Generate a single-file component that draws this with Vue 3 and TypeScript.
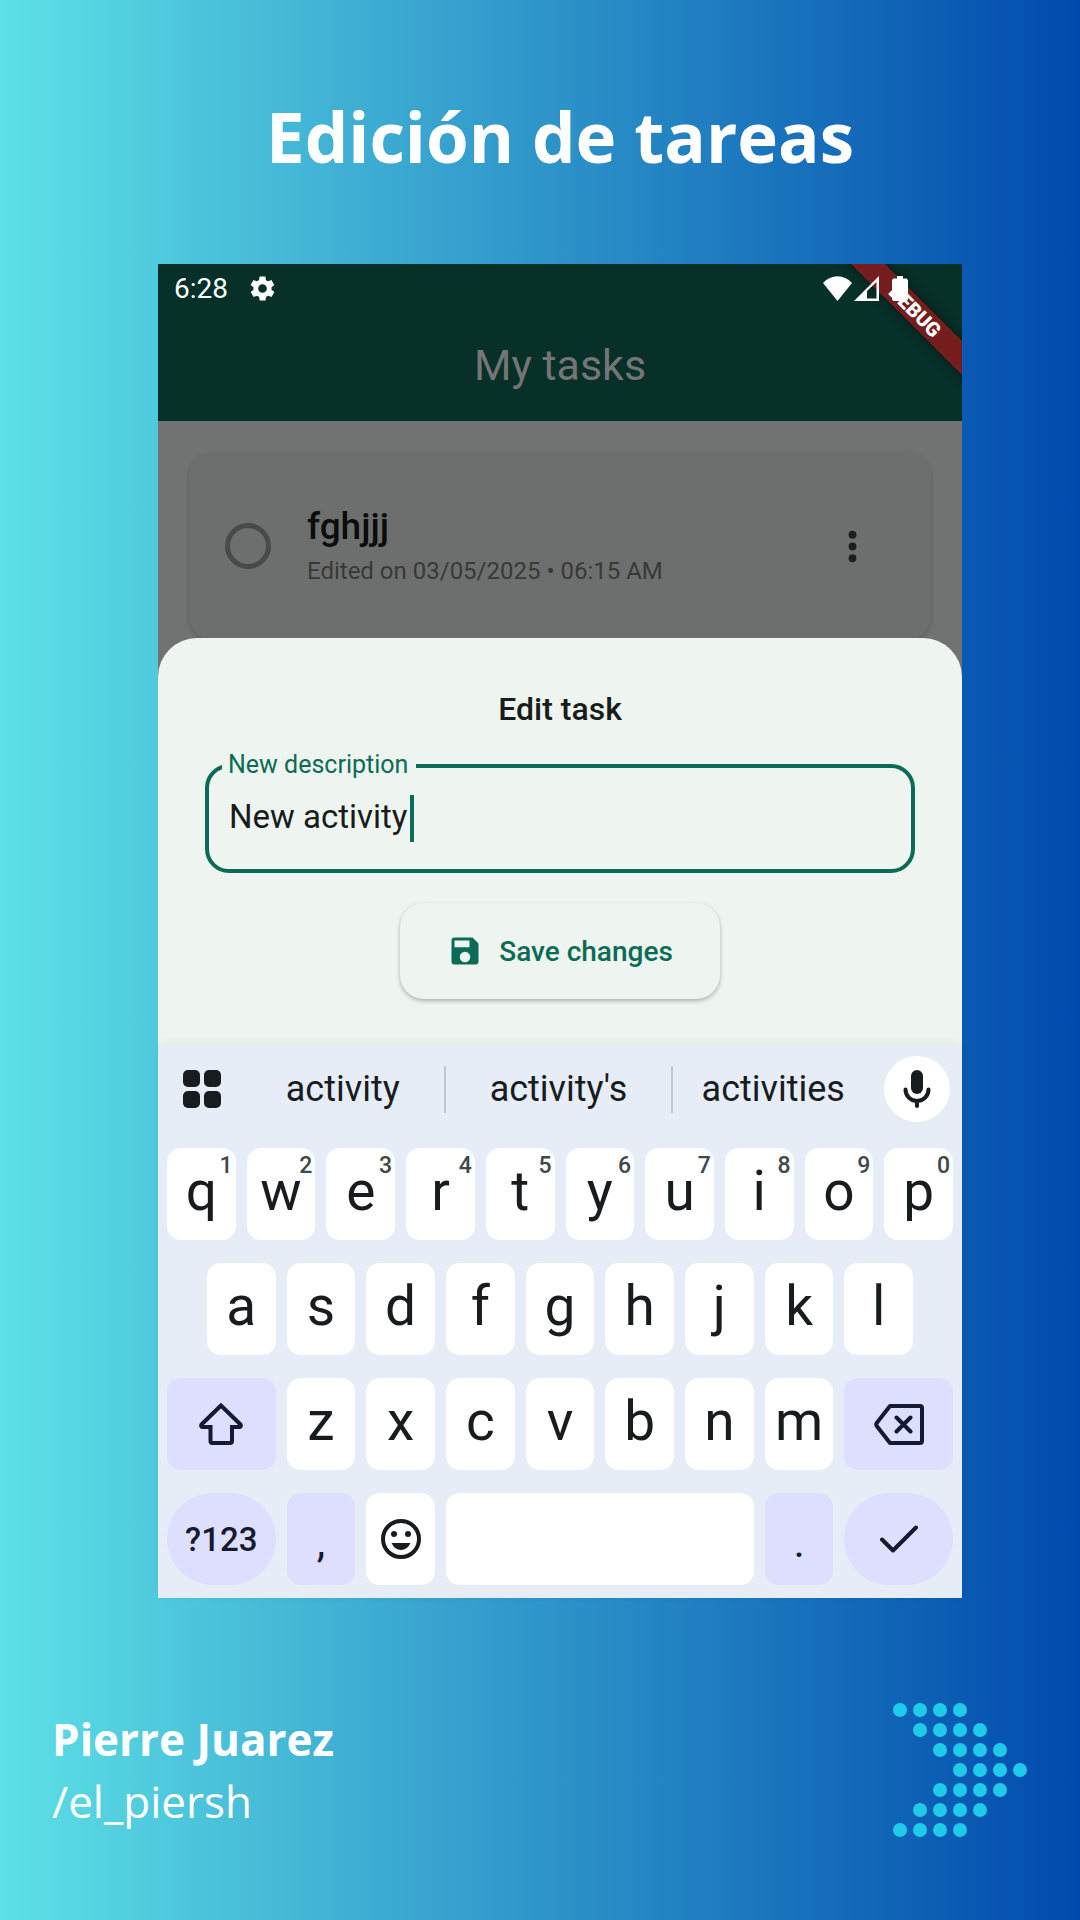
<script setup lang="ts">
import { ref } from 'vue'

interface Key {
  label: string
  kind: 'letter' | 'symbol' | 'mode' | 'shift' | 'backspace' | 'emoji' | 'space' | 'enter'
  hint?: string
  classes?: string
}

const description = ref('New activity')
const done = ref(false)
const suggestions = ['activity', "activity's", 'activities']

const letters = (row: string): Key[] =>
  row.split('').map((label) => ({ label, kind: 'letter' }))

const keys: Key[] = [
  ...letters('qwertyuiop').map((key, i) => ({ ...key, hint: String((i + 1) % 10) })),
  ...letters('asdfghjkl').map((key, i) => (i === 0 ? { ...key, classes: 'indent' } : key)),
  { label: 'Shift', kind: 'shift', classes: 'wide tinted' },
  ...letters('zxcvbnm'),
  { label: 'Backspace', kind: 'backspace', classes: 'wide tinted' },
  { label: '?123', kind: 'mode', classes: 'wide tinted round' },
  { label: ',', kind: 'symbol', classes: 'tinted' },
  { label: 'Emoji', kind: 'emoji' },
  { label: 'Space', kind: 'space', classes: 'spacebar' },
  { label: '.', kind: 'symbol', classes: 'tinted' },
  { label: 'Done', kind: 'enter', classes: 'wide tinted round' },
]

const hasText = (key: Key): boolean => ['letter', 'symbol', 'mode'].includes(key.kind)

// Arrow made of dots: each row holds four, shifted towards the tip
const arrowDots = [0, 1, 2, 3, 2, 1, 0].flatMap((start, row) =>
  [0, 1, 2, 3].map((n) => ({ x: 7 + (start + n) * 20, y: 7 + row * 20 })),
)
</script>

<template>
  <main class="poster">
    <h1 class="headline">Edición de tareas</h1>

    <section class="phone">
      <header class="app-header">
        <div class="debug-banner">DEBUG</div>
        <div class="status-bar">
          <span class="clock">6:28</span>
          <svg class="gear" viewBox="0 0 24 24" width="29" height="29" aria-hidden="true">
            <path
              fill="#fff"
              d="M19.5 12c0-.3 0-.6-.1-1l2.1-1.6c.2-.1.2-.4.1-.6l-2-3.5c-.1-.2-.4-.3-.6-.2l-2.5 1c-.5-.4-1.100-.7-1.700-1l-.3-2.600c0-.3-.3-.5-.5-.5h-4c-.3 0-.5.2-.5.5l-.4 2.600c-.6.3-1.200.6-1.700 1l-2.500-1c-.2-.1-.5 0-.6.2l-2 3.500c-.1.2-.1.500.1.6L4.600 11c-.1.300-.1.700-.1 1s0 .7.100 1l-2.100 1.600c-.2.200-.2.400-.1.600l2 3.500c.1.200.4.300.6.200l2.500-1c.5.400 1.100.7 1.700 1l.4 2.600c0 .300.2.500.5.500h4c.2 0 .5-.2.500-.5l.3-2.600c.6-.3 1.200-.6 1.700-1l2.500 1c.2.100.5 0 .6-.2l2-3.500c.1-.2.100-.5-.1-.6L19.400 13c.1-.3.100-.6.100-1zM12 15.600a3.600 3.600 0 1 1 0-7.200 3.600 3.600 0 0 1 0 7.200z"
            />
          </svg>
          <div class="indicators">
            <svg viewBox="0 0 29 25" width="29" height="25" aria-hidden="true">
              <path fill="#fff" d="M14.500 25 0 7C8-2 21-2 29 7z" />
            </svg>
            <svg viewBox="0 0 25 25" width="25" height="25" aria-hidden="true">
              <path fill="#fff" fill-rule="evenodd" d="M25 0v25H0zM22.500 6 13 15v7.500h9.500z" />
            </svg>
            <svg class="battery" viewBox="0 0 16 25" width="16" height="25" aria-hidden="true">
              <path fill="#fff" d="M5 0h6v2.500h3.500L16 4v19.500L14.500 25h-13L0 23.500V4l1.500-1.500H5z" />
            </svg>
          </div>
        </div>
        <h2 class="app-title">My tasks</h2>
      </header>

      <div class="task-list">
        <article class="task-card">
          <input id="task-done" v-model="done" class="task-check" type="checkbox" />
          <label class="task-text" for="task-done">
            <span class="task-name">fghjjj</span>
            <span class="task-date">Edited on 03/05/2025 • 06:15 AM</span>
          </label>
          <button class="task-menu" type="button" aria-label="More">
            <svg viewBox="0 0 24 24" width="47" height="47" aria-hidden="true">
              <circle cx="12" cy="6" r="2" />
              <circle cx="12" cy="12" r="2" />
              <circle cx="12" cy="18" r="2" />
            </svg>
          </button>
        </article>
      </div>

      <form class="sheet" @submit.prevent>
        <h3 class="sheet-title">Edit task</h3>
        <div class="field">
          <label class="field-label" for="description">New description</label>
          <input id="description" v-model="description" class="field-input" type="text" />
          <span class="caret"></span>
        </div>
        <button class="save" type="submit">
          <svg viewBox="0 0 24 24" width="36" height="36" aria-hidden="true">
            <path
              fill="currentColor"
              d="M17 3H5a2 2 0 0 0-2 2v14a2 2 0 0 0 2 2h14a2 2 0 0 0 2-2V7zM12 19.500a3.500 3.500 0 1 1 0-7 3.500 3.500 0 0 1 0 7zM15 9.500H5V5h10z"
            />
          </svg>
          Save changes
        </button>
      </form>

      <section class="keyboard">
        <div class="strip">
          <button class="tools" type="button" aria-label="Tools">
            <svg viewBox="0 0 38 38" width="38" height="38" fill="currentColor" aria-hidden="true">
              <rect width="17" height="17" rx="5" />
              <rect x="21" width="17" height="17" rx="5" />
              <rect y="21" width="17" height="17" rx="5" />
              <rect x="21" y="21" width="17" height="17" rx="5" />
            </svg>
          </button>
          <div class="suggestions">
            <button v-for="word in suggestions" :key="word" class="suggestion" type="button">
              {{ word }}
            </button>
          </div>
          <button class="mic" type="button" aria-label="Voice input">
            <svg viewBox="0 0 28 38" width="28" height="38" fill="none" aria-hidden="true">
              <rect x="8" width="12" height="24" rx="6" fill="currentColor" />
              <path
                d="M2.500 19.500a11.500 11.500 0 0 0 23 0M14 31v5"
                stroke="currentColor"
                stroke-width="4"
                stroke-linecap="round"
              />
            </svg>
          </button>
        </div>

        <div class="keys">
          <button
            v-for="key in keys"
            :key="key.label"
            type="button"
            :class="['key', key.kind, key.classes]"
            :aria-label="key.label"
          >
            <template v-if="hasText(key)">{{ key.label }}</template>
            <span v-if="key.hint" class="hint">{{ key.hint }}</span>

            <svg v-if="key.kind === 'shift'" viewBox="0 0 44 42" width="44" height="42" fill="none" aria-hidden="true">
              <path
                d="M22 2.500 2.500 21.500q-1 2.500 1 2.500H11.500V38q0 2 2 2H31q2 0 2-2V24H40.500q2 0 1-2.500z"
                stroke="currentColor"
                stroke-width="4"
              />
            </svg>
            <svg v-if="key.kind === 'backspace'" viewBox="0 0 50 41" width="50" height="41" fill="none" aria-hidden="true">
              <path
                d="M16 2H46q2 0 2 2V37q0 2-2 2H16L2.700 22q-1-1.500 0-3zM22.500 13.500l14 14M36.500 13.500l-14 14"
                stroke="currentColor"
                stroke-width="4"
                stroke-linecap="round"
                stroke-linejoin="round"
              />
            </svg>
            <svg v-if="key.kind === 'emoji'" viewBox="0 0 40 40" width="40" height="40" aria-hidden="true">
              <circle cx="20" cy="20" r="18" fill="none" stroke="currentColor" stroke-width="4" />
              <circle cx="13" cy="15" r="3" fill="currentColor" />
              <circle cx="27" cy="15" r="3" fill="currentColor" />
              <path d="M10.500 24h19q-3 7-9.500 7t-9.500-7z" fill="currentColor" />
            </svg>
            <svg v-if="key.kind === 'enter'" viewBox="0 0 38 28" width="38" height="28" fill="none" aria-hidden="true">
              <path
                d="M2 14.500 13 25.500 36 2.500"
                stroke="currentColor"
                stroke-width="4"
                stroke-linecap="round"
                stroke-linejoin="round"
              />
            </svg>
          </button>
        </div>
      </section>
    </section>

    <footer class="credits">
      <address class="author">
        <strong class="author-name">Pierre Juarez</strong>
        <span>/el_piersh</span>
      </address>
      <svg viewBox="0 0 134 134" width="134" height="134" aria-hidden="true">
        <circle v-for="(dot, i) in arrowDots" :key="i" :cx="dot.x" :cy="dot.y" r="7" fill="#1fcbe9" />
      </svg>
    </footer>
  </main>
</template>

<style>
body {
  margin: 0;
}
</style>

<style scoped>
.poster {
  box-sizing: border-box;
  min-height: 100vh;
  padding: 88px 118px 83px 158px;
  background: linear-gradient(90deg, #5de0e6, #004aad);
  color: #fff;
  font-family: Roboto, "Liberation Sans", sans-serif;
}

h1,
h2,
h3 {
  margin: 0;
}

button {
  border: 0;
  padding: 0;
  background: none;
  color: inherit;
  font-family: inherit;
}

svg {
  display: block;
}

.headline {
  margin-bottom: 80px;
  font: 700 69px/96px "Open Sans", sans-serif;
  text-align: center;
}

.phone {
  background: #717372;
}

/* App header */
.app-header {
  position: relative;
  overflow: hidden;
  background: #063028;
}

.debug-banner {
  position: absolute;
  top: 35px;
  right: -53px;
  width: 200px;
  background: #741d1c;
  box-shadow: 0 0 12px rgba(0, 0, 0, 0.5);
  font-size: 20px;
  font-weight: 900;
  line-height: 24px;
  text-align: center;
  transform: rotate(45deg);
}

.status-bar {
  position: relative;
  display: flex;
  align-items: center;
  padding: 8px 54px 4px 16px;
  font-size: 28px;
  line-height: 33px;
}

.gear {
  margin-left: 20px;
}

.indicators {
  display: flex;
  gap: 2px;
  margin-left: auto;
}

.battery {
  margin-left: 11px;
}

.app-title {
  color: #757575;
  font-size: 43px;
  font-weight: 400;
  line-height: 112px;
  text-align: center;
}

/* Dimmed task list */
.task-list {
  padding: 31px 31px 37px;
}

.task-card {
  display: flex;
  align-items: center;
  gap: 36px;
  height: 188px;
  padding: 0 55px 0 36px;
  border-radius: 24px;
  background: #6d6f6e;
  box-shadow: 0 2px 4px rgba(0, 0, 0, 0.2);
}

.task-check {
  appearance: none;
  width: 46px;
  height: 46px;
  margin: 0;
  border: 5px solid #474a46;
  border-radius: 50%;
}

.task-text {
  display: flex;
  flex: 1;
  flex-direction: column;
  gap: 8px;
}

.task-name {
  color: #0b0c0c;
  font-size: 37px;
  font-weight: 500;
  line-height: 42px;
}

.task-date {
  color: #373938;
  font-size: 24px;
  line-height: 30px;
}

.task-menu {
  color: #1c1f1e;
}

.task-menu svg {
  fill: currentColor;
}

/* Bottom sheet */
.sheet {
  position: relative;
  display: flex;
  flex-direction: column;
  align-items: center;
  margin-top: -39px;
  padding: 53px 47px 46px;
  border-radius: 39px 39px 0 0;
  background: #eef4f0;
  color: #181c1a;
}

.sheet-title {
  margin-bottom: 37px;
  font-size: 32px;
  font-weight: 500;
  line-height: 36px;
}

.field {
  position: relative;
  align-self: stretch;
  margin-bottom: 30px;
}

.field-label {
  position: absolute;
  top: -13px;
  left: 17px;
  padding: 0 8px 0 6px;
  background: #eef4f0;
  color: #0b6b56;
  font-size: 25px;
  line-height: 28px;
}

.field-input {
  display: block;
  box-sizing: border-box;
  width: 100%;
  height: 109px;
  padding: 0 20px 4px;
  border: 4px solid #0b6b56;
  border-radius: 24px;
  outline: 0;
  background: transparent;
  color: inherit;
  font: 400 33px Roboto, sans-serif;
}

.caret {
  position: absolute;
  top: 31px;
  left: 205px;
  width: 4px;
  height: 47px;
  background: #0b6b56;
}

.save {
  display: flex;
  align-items: center;
  gap: 16px;
  height: 96px;
  padding: 0 47px;
  border-radius: 24px;
  box-shadow: 0 2px 4px rgba(0, 0, 0, 0.28);
  color: #0b6b56;
  font-size: 28px;
  font-weight: 500;
}

/* Keyboard */
.keyboard {
  position: relative;
  padding: 11px 9px 13px;
  background: #e6edf6;
  box-shadow: 0 -2px 8px rgba(0, 0, 0, 0.06);
  color: #181c1f;
}

.strip {
  display: flex;
  align-items: center;
  margin-bottom: 26px;
  padding: 0 3px 0 16px;
}

.suggestions {
  display: grid;
  flex: 1;
  grid-template-columns: 9fr 10fr 9fr;
  margin: 0 10px 0 20px;
}

.suggestion {
  font-size: 36px;
  line-height: 47px;
}

.suggestion + .suggestion {
  border-left: 2px solid #c0c7cf;
}

.mic {
  display: grid;
  width: 66px;
  height: 66px;
  border-radius: 50%;
  background: #fff;
  place-items: center;
}

.keys {
  display: grid;
  grid-template-columns: repeat(20, minmax(0, 1fr));
  gap: 23px 11px;
}

.key {
  position: relative;
  display: flex;
  grid-column-end: span 2;
  align-items: center;
  justify-content: center;
  height: 92px;
  border-radius: 14px;
  background: #fff;
  font-size: 55px;
}

.letter {
  padding-bottom: 7px;
}

.indent {
  grid-column-start: 2;
}

.wide {
  grid-column-end: span 3;
}

.spacebar {
  grid-column-end: span 8;
}

.tinted {
  background: #dedffe;
  color: #151932;
}

.round {
  border-radius: 46px;
}

.symbol {
  padding-top: 5px;
  font-size: 43px;
}

.mode {
  font-size: 33px;
  font-weight: 500;
}

.hint {
  position: absolute;
  top: 4px;
  right: 3px;
  color: #40484c;
  font-size: 23px;
  font-weight: 500;
  line-height: 27px;
}

/* Credits */
.credits {
  display: flex;
  align-items: center;
  justify-content: space-between;
  margin: 105px -65px 0 -106px;
}

.author {
  display: flex;
  flex-direction: column;
  font: 400 44px/62px "Open Sans", sans-serif;
}
</style>
